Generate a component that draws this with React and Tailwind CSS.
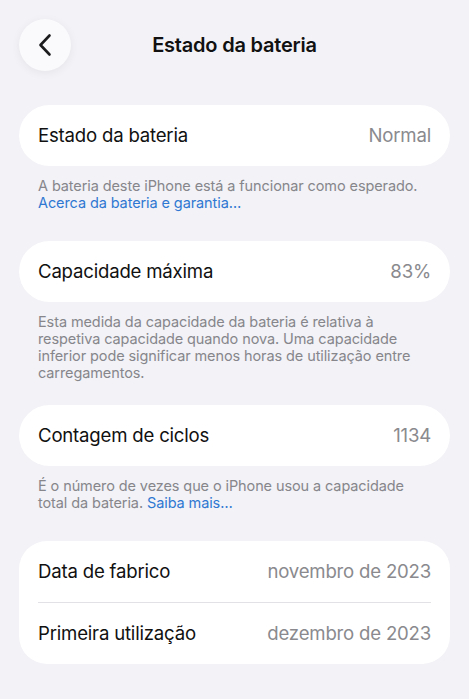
import React from "react";

const font = { fontFamily: "Inter, 'Noto Sans', sans-serif" };

const Row = ({ label, value }) => (
    <div className="flex items-center justify-between h-[61px] px-[19px]">
        <span className="text-[18.6px] text-[#111] tracking-[-0.2px]">{label}</span>
        <span className="text-[18.6px] text-[#8a8a8e] tracking-[-0.2px]">{value}</span>
    </div>
);

const Note = ({ children }) => (
    <p className="px-[19px] pt-[11px] text-[14.5px] leading-[17px] text-[#86868b] tracking-[-0.1px]">{children}</p>
);

export default function App() {
    return (
        <div className="min-h-[699px] bg-[#f2f2f7] px-[19px] pt-[19px]" style={font}>
            {/* cabeçalho */}
            <div className="relative flex items-center justify-center h-[52px]">
                <button className="absolute left-0 top-0 w-[52px] h-[52px] rounded-full bg-[#fafafc] shadow-[0_2px_10px_rgba(0,0,0,0.06)] flex items-center justify-center">
                    <svg width="14" height="24" viewBox="0 0 14 24" fill="none">
                        <path d="M11.5 2.5 L2.5 12 L11.5 21.5" stroke="#1c1c1e" strokeWidth="2.6" strokeLinecap="round" strokeLinejoin="round" />
                    </svg>
                </button>
                <h1 className="text-[20px] font-semibold text-[#111] tracking-[-0.2px]">Estado da bateria</h1>
            </div>

            <div className="mt-[34px] bg-white rounded-full">
                <Row label="Estado da bateria" value="Normal" />
            </div>
            <Note>
                A bateria deste iPhone está a funcionar como esperado.
                <br />
                <span className="text-[#2f78d2]">Acerca da bateria e garantia…</span>
            </Note>

            <div className="mt-[30px] bg-white rounded-full">
                <Row label="Capacidade máxima" value="83%" />
            </div>
            <Note>
                Esta medida da capacidade da bateria é relativa à
                <br />
                respetiva capacidade quando nova. Uma capacidade
                <br />
                inferior pode significar menos horas de utilização entre
                <br />
                carregamentos.
            </Note>

            <div className="mt-[24px] bg-white rounded-full">
                <Row label="Contagem de ciclos" value="1134" />
            </div>
            <Note>
                É o número de vezes que o iPhone usou a capacidade
                <br />
                total da bateria. <span className="text-[#2f78d2]">Saiba mais…</span>
            </Note>

            <div className="mt-[30px] bg-white rounded-[28px]">
                <Row label="Data de fabrico" value="novembro de 2023" />
                <div className="mx-[19px] h-px bg-[#e2e2e6]" />
                <Row label="Primeira utilização" value="dezembro de 2023" />
            </div>
        </div>
    );
}
